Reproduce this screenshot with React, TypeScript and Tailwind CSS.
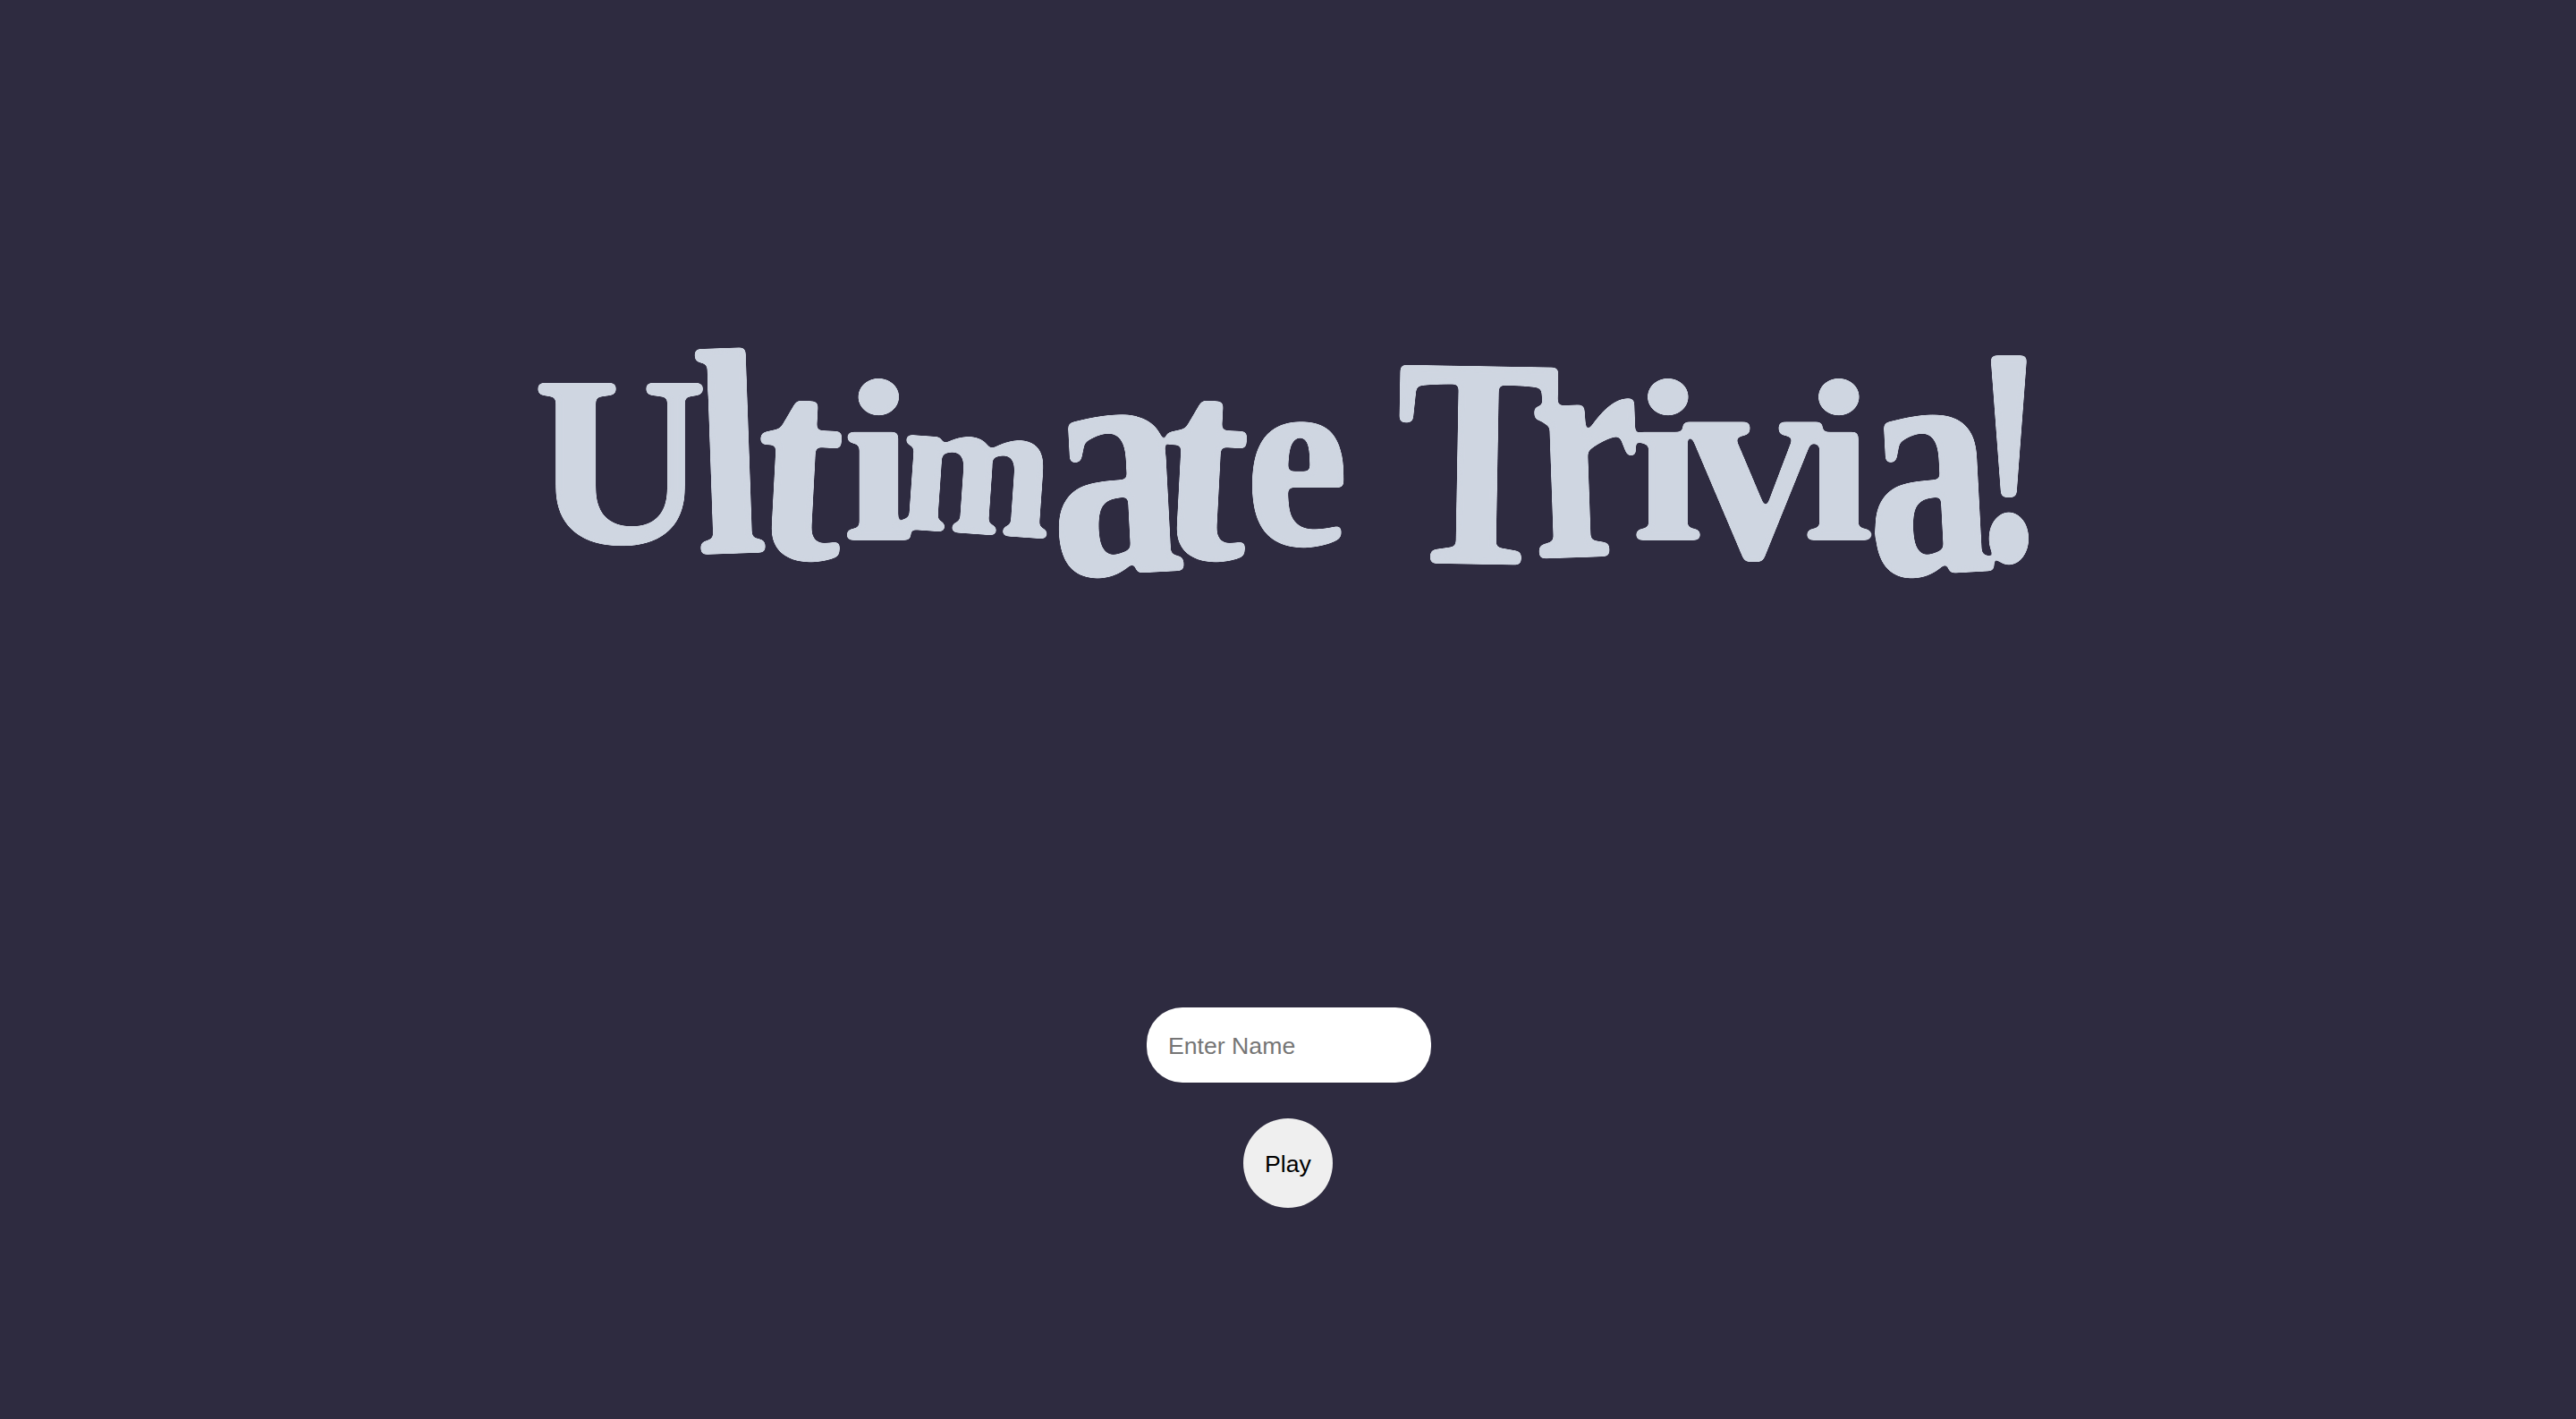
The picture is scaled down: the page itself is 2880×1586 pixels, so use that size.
const letters = [
  { ch: 'U', cls: 'w-[188px] text-[269px] scale-x-[1.0] -translate-y-[3px]' },
  { ch: 'l', cls: 'w-[79px] -ml-[12px] text-[326px] scale-x-[0.88] translate-y-[8px] -rotate-[2deg]' },
  { ch: 't', cls: 'w-[107px] -ml-[14px] text-[308px] scale-x-[0.95] translate-y-[14px] rotate-[3deg]' },
  { ch: 'i', cls: 'w-[73px] -ml-[3px] text-[256px] scale-x-[1.1] -translate-y-[7px]' },
  { ch: 'm', cls: 'w-[169px] -ml-[10px] text-[222px] scale-x-[0.92] -translate-y-[14px] rotate-[4deg]' },
  { ch: 'a', cls: 'w-[138px] text-[372px] scale-x-[0.8] translate-y-[31px] -rotate-[3deg]' },
  { ch: 't', cls: 'w-[107px] -ml-[21px] text-[308px] scale-x-[0.95] translate-y-[14px] rotate-[3deg]' },
  { ch: 'e', cls: 'w-[104px] -ml-[3px] text-[287px] scale-x-[0.9] -translate-y-[1px]' },
  { ch: 'T', cls: 'w-[168px] ml-[66px] text-[333px] scale-x-[0.82] translate-y-[20px] rotate-[1deg]' },
  { ch: 'r', cls: 'w-[118px] -ml-[23px] text-[364px] scale-x-[0.76] translate-y-[12px] -rotate-[2deg]' },
  { ch: 'i', cls: 'w-[72px] -ml-[3px] text-[256px] scale-x-[1.1] -translate-y-[7px]' },
  { ch: 'v', cls: 'w-[151px] -ml-[16px] text-[326px] scale-x-[0.94] translate-y-[14px]' },
  { ch: 'i', cls: 'w-[72px] -ml-[16px] text-[256px] scale-x-[1.1] -translate-y-[7px]' },
  { ch: 'a', cls: 'w-[131px] -ml-[1px] text-[372px] scale-x-[0.76] translate-y-[31px] -rotate-[3deg]' },
  { ch: '!', cls: 'w-[38px] ml-[6px] text-[345px] scale-x-[0.75] translate-y-[16px]' },
];

export default function App() {
  return (
    <div className="min-h-screen bg-[#2e2b40] flex flex-col items-center font-['Liberation_Sans',sans-serif]">
      {/* blur + alpha threshold rounds off the serif corners of the title */}
      <svg className="absolute w-0 h-0" aria-hidden="true">
        <filter id="soften" x="0" y="0" width="100%" height="100%">
          <feGaussianBlur stdDeviation="3" />
          <feComponentTransfer>
            <feFuncA type="linear" slope="14" intercept="-6" />
          </feComponentTransfer>
        </filter>
      </svg>
      {/* title letters are squeezed one by one to get the wobbly look */}
      <h1
        aria-label="Ultimate Trivia!"
        className="flex items-baseline justify-center w-full h-[1126px] pt-[298px] pr-[16px] leading-none font-bold font-['Liberation_Serif',serif] text-[#cfd6e1] [-webkit-text-stroke:3px_#cfd6e1] [filter:url(#soften)]"
      >
        {letters.map((l, i) => (
          <span key={i} className={`flex justify-center shrink-0 ${l.cls}`}>
            {l.ch}
          </span>
        ))}
      </h1>
      <input
        placeholder="Enter Name"
        className="w-[318px] h-[84px] ml-[2px] px-[24px] pt-[2px] rounded-[40px] bg-white text-[26.67px] text-black placeholder:text-[#757575] outline-none"
      />
      <button className="w-[100px] h-[100px] mt-[40px] pt-[2px] rounded-full bg-[#efefef] text-[26.67px] text-black">
        Play
      </button>
    </div>
  );
}
